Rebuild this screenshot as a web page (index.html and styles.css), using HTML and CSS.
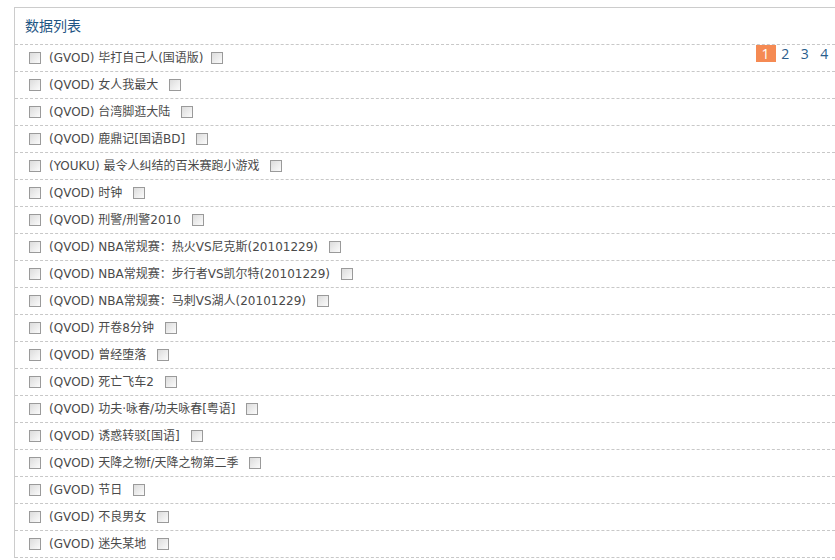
FILE: index.html
```html
<!DOCTYPE html>
<html lang="zh-CN">
<head>
<meta charset="utf-8">
<title>数据列表</title>
<link rel="stylesheet" href="styles.css">
</head>
<body>
<div class="panel">
  <div class="panel-title">数据列表</div>
  <div class="list">
    <div class="row"><span class="cb"></span><span class="txt">(GVOD) 毕打自己人(国语版)</span><span class="cb cb2"></span>
      <div class="paging"><a class="pg cur">1</a><a class="pg">2</a><a class="pg">3</a><a class="pg">4</a></div>
    </div>
    <div class="row"><span class="cb"></span><span class="txt">(QVOD) 女人我最大 </span><span class="cb cb2"></span></div>
    <div class="row"><span class="cb"></span><span class="txt">(QVOD) 台湾脚逛大陆 </span><span class="cb cb2"></span></div>
    <div class="row"><span class="cb"></span><span class="txt">(QVOD) 鹿鼎记[国语BD] </span><span class="cb cb2"></span></div>
    <div class="row"><span class="cb"></span><span class="txt">(YOUKU) 最令人纠结的百米赛跑小游戏 </span><span class="cb cb2"></span></div>
    <div class="row"><span class="cb"></span><span class="txt">(QVOD) 时钟 </span><span class="cb cb2"></span></div>
    <div class="row"><span class="cb"></span><span class="txt">(QVOD) 刑警/刑警2010 </span><span class="cb cb2"></span></div>
    <div class="row"><span class="cb"></span><span class="txt">(QVOD) NBA常规赛：热火VS尼克斯(20101229) </span><span class="cb cb2"></span></div>
    <div class="row"><span class="cb"></span><span class="txt">(QVOD) NBA常规赛：步行者VS凯尔特(20101229) </span><span class="cb cb2"></span></div>
    <div class="row"><span class="cb"></span><span class="txt">(QVOD) NBA常规赛：马刺VS湖人(20101229) </span><span class="cb cb2"></span></div>
    <div class="row"><span class="cb"></span><span class="txt">(QVOD) 开卷8分钟 </span><span class="cb cb2"></span></div>
    <div class="row"><span class="cb"></span><span class="txt">(QVOD) 曾经堕落 </span><span class="cb cb2"></span></div>
    <div class="row"><span class="cb"></span><span class="txt">(QVOD) 死亡飞车2 </span><span class="cb cb2"></span></div>
    <div class="row"><span class="cb"></span><span class="txt">(QVOD) 功夫·咏春/功夫咏春[粤语] </span><span class="cb cb2"></span></div>
    <div class="row"><span class="cb"></span><span class="txt">(QVOD) 诱惑转驳[国语] </span><span class="cb cb2"></span></div>
    <div class="row"><span class="cb"></span><span class="txt">(QVOD) 天降之物f/天降之物第二季 </span><span class="cb cb2"></span></div>
    <div class="row"><span class="cb"></span><span class="txt">(GVOD) 节日 </span><span class="cb cb2"></span></div>
    <div class="row"><span class="cb"></span><span class="txt">(GVOD) 不良男女 </span><span class="cb cb2"></span></div>
    <div class="row"><span class="cb"></span><span class="txt">(GVOD) 迷失某地 </span><span class="cb cb2"></span></div>
  </div>
</div>
</body>
</html>
```

FILE: styles.css
```css
html, body {
  margin: 0;
  padding: 0;
  overflow: hidden;
  background: #fff;
}
body {
  font-family: "DejaVu Sans", "Noto Sans CJK SC", sans-serif;
  font-size: 12px;
  color: #4a4a4a;
}
.panel {
  margin: 7px 0 0 14px;
  border-top: 1px solid #ccc;
  border-left: 1px solid #ccc;
}
.panel-title {
  height: 36px;
  line-height: 34px;
  padding-left: 10px;
  font-size: 14px;
  color: #1f5684;
  font-family: "Noto Sans CJK SC", sans-serif;
}
.row {
  display: flex;
  align-items: center;
  height: 26px;
  border-top: 1px dashed #c8c8c8;
  padding-left: 14px;
}
.row:last-child {
  border-bottom: 1px dashed #c8c8c8;
}
.cb {
  display: inline-block;
  width: 10px;
  height: 10px;
  border: 1px solid #9a9a9a;
  background: linear-gradient(135deg, #dcdcdc, #fbfbfb);
  flex: none;
}
.txt {
  margin-left: 8px;
  white-space: pre;
  line-height: 26px;
}
.cb2 {
  margin-left: 7px;
}
.paging {
  margin-left: auto;
  align-self: flex-start;
  display: flex;
  padding-right: 1px;
}
.pg {
  display: block;
  width: 19.5px;
  height: 17px;
  line-height: 17px;
  text-align: center;
  font-size: 14px;
  color: #2a5d8c;
  font-family: "Open Sans", sans-serif;
}
.pg.cur {
  width: 20px;
  background: #f58a53;
  color: #fff;
}
```
